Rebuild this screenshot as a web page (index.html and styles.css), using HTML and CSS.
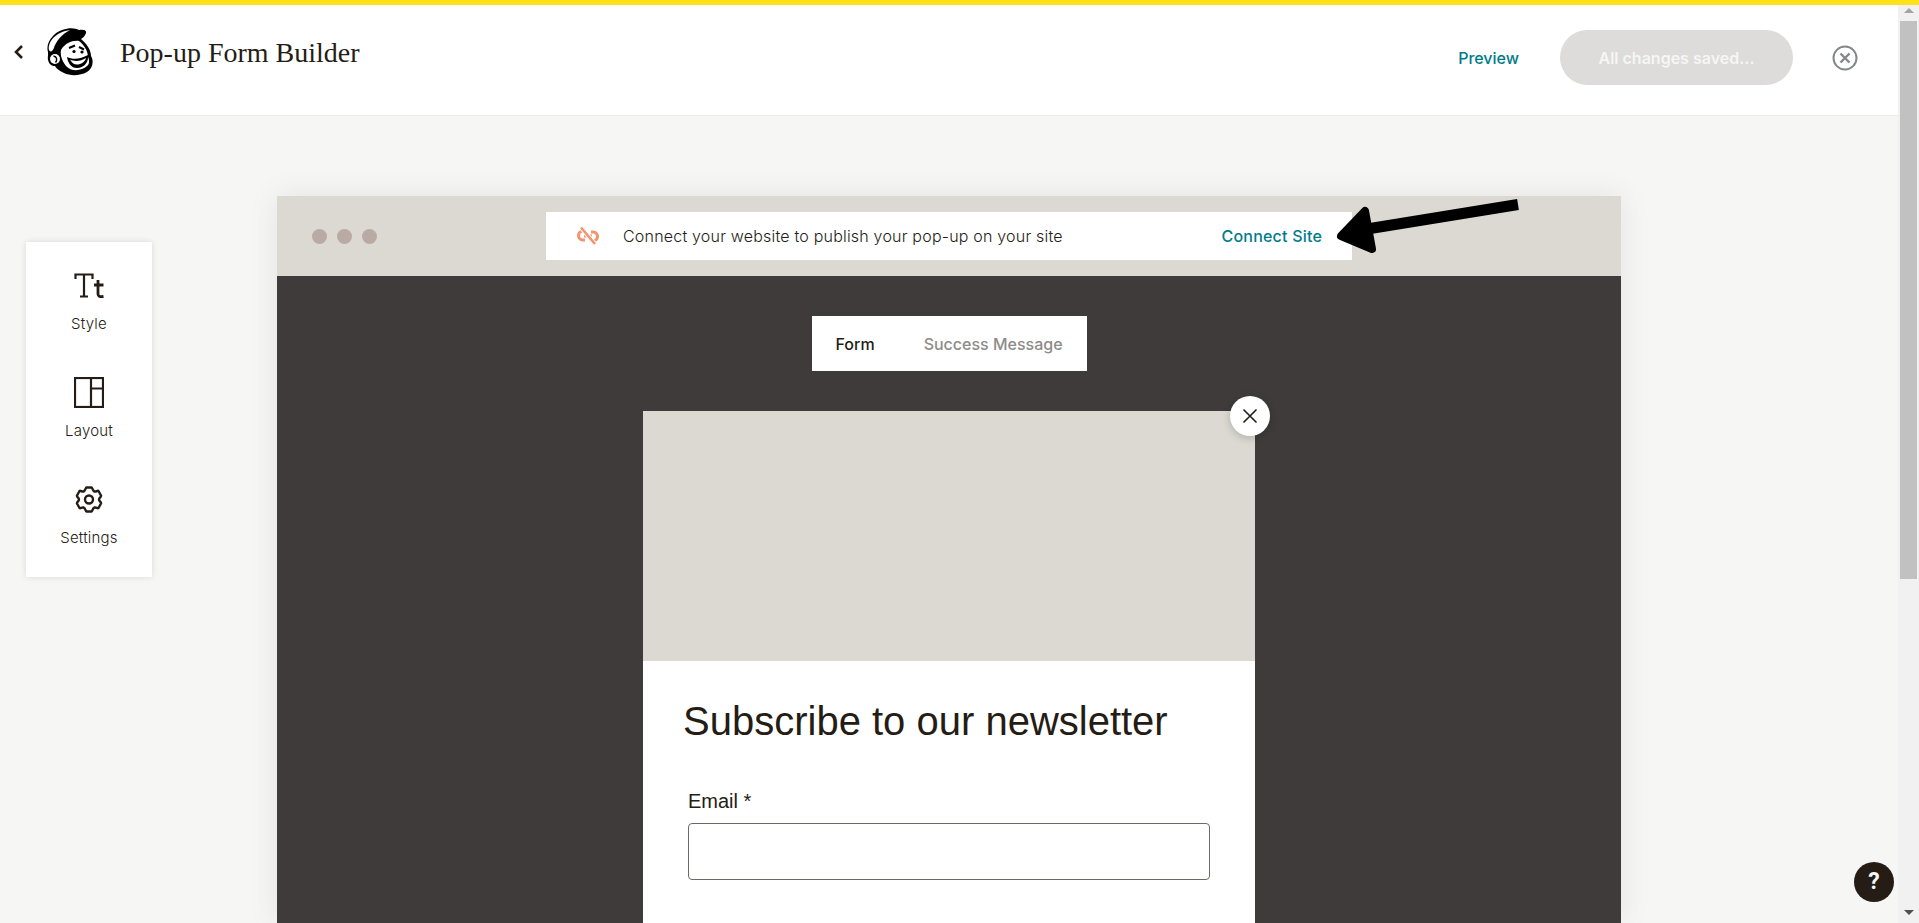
FILE: index.html
```html
<!DOCTYPE html>
<html lang="en">
<head>
  <meta charset="UTF-8" />
  <title>Pop-up Form Builder</title>
  <link rel="stylesheet" href="styles.css">
</head>
<body>
  <div class="page">
    <div class="main">

      <!-- Top bar -->
      <header class="topbar">
        <svg class="back" width="12" height="16" viewBox="0 0 12 16"><path d="M9 2 L3 8 L9 14" fill="none" stroke="#241c15" stroke-width="2.6"/></svg>
        <svg class="logo" width="48" height="48" viewBox="0 0 48 48">
          <path d="M2 24 C-1 15 8 2 22 0.500 C28 0 30 1 33 2 C37 1 41 2 40 5 C39 8 37 10 35 11 C41 16 45 22 45 28 C48 33 47 40 41 44 C34 48 24 48 18 45 C13 43 10 40 9 38 C4 38 1 33 2 28 Z" fill="#000"/>
          <path d="M3 22 C1.500 14 10 3.500 24 2 C16 6 10 13 7.500 21 C6 24 4 24 3 22 Z" fill="#fff"/>
          <path d="M15 22 C19 15 27 12 33 13 C38 17 42 23 42 29 C44 33 43 37 41 38 C36 43 25 44 20 38 C16 33 14 27 15 22 Z" fill="#fff"/>
          <path d="M21 29 C27 32 35 31 42 27 C43 33 39 40 31 40 C25 40 22 35 21 29 Z" fill="#000"/>
          <path d="M24 31.500 C29 34 35 33 40 30 C39 34 35 36.500 31 36.500 C28 36.500 25.500 34.500 24 31.500 Z" fill="#fff"/>
          <path d="M23 20 L29 17.500 M33 19 L38 21.500" stroke="#000" stroke-width="2" fill="none"/>
          <circle cx="28" cy="23.500" r="1.600" fill="#000"/>
          <circle cx="36" cy="24" r="1.600" fill="#000"/>
          <circle cx="9" cy="31" r="5" fill="#fff"/>
          <path d="M7.500 28 C11 28.500 11.500 32 9.500 34.500" stroke="#000" stroke-width="1.400" fill="none"/>
        </svg>
        <h1 class="title">Pop-up Form Builder</h1>
        <div class="actions">
          <a class="preview">Preview</a>
          <button class="saved">All changes saved...</button>
          <svg class="exit" width="26" height="26" viewBox="0 0 26 26">
            <circle cx="13" cy="13" r="11.500" fill="none" stroke="#85888a" stroke-width="2"/>
            <path d="M8.500 8.500 L17.500 17.500 M17.500 8.500 L8.500 17.500" stroke="#85888a" stroke-width="2.400"/>
          </svg>
        </div>
      </header>

      <div class="workspace">

        <!-- Side tools -->
        <nav class="tools">
          <div class="tool">
            <svg width="30" height="31" viewBox="0 0 30 31" fill="none" stroke="#241c15">
              <path d="M1.500 9 V4.500 H18.500 V9 M10 4.500 V26.500 M6 26.500 H14" stroke-width="2.200"/>
              <path d="M24 10 V24 C24 26.500 26 27 29.500 26.500 M20 15 H29.500" stroke-width="2.800"/>
            </svg>
            <span>Style</span>
          </div>
          <div class="tool">
            <svg width="30" height="31" viewBox="0 0 30 31" fill="none" stroke="#241c15" stroke-width="2.200">
              <rect x="1" y="1" width="28" height="29"/>
              <path d="M17 1 V30 M17 11.500 H29"/>
            </svg>
            <span>Layout</span>
          </div>
          <div class="tool">
            <svg width="28" height="31" viewBox="0 -1.500 28 31" fill="none" stroke="#241c15" stroke-width="2.400">
              <path d="M11.500 2 H16.500 C17.500 2 17.500 5.500 19.500 6 C21.500 6.500 22.500 4.500 23.500 5.500 L26 10 C26.500 11.500 24 12 24 14 C24 16 26.500 16.500 26 18 L23.500 22.500 C22.500 23.500 21.500 21.500 19.500 22 C17.500 22.500 17.500 26 16.500 26 H11.500 C10.500 26 10.500 22.500 8.500 22 C6.500 21.500 5.500 23.500 4.500 22.500 L2 18 C1.500 16.500 4 16 4 14 C4 12 1.500 11.500 2 10 L4.500 5.500 C5.500 4.500 6.500 6.500 8.500 6 C10.500 5.500 10.500 2 11.500 2 Z" stroke-linejoin="round"/>
              <circle cx="14" cy="14" r="4"/>
            </svg>
            <span>Settings</span>
          </div>
        </nav>

        <!-- Preview frame -->
        <section class="frame">
          <div class="chrome">
            <div class="dots"><i></i><i></i><i></i></div>
            <div class="notice">
              <svg class="unlink" width="24" height="20" viewBox="0 0 24 20" fill="none" stroke="#f4946f" stroke-width="3">
                <path d="M9 5 H7 C1 5 1 14 7 14 H9 M15 6 H17 C23 6 23 15 17 15 H15 M8 10 H16"/>
                <path d="M5 1.500 L19 18" stroke="#fff" stroke-width="4.500"/>
                <path d="M5 1.500 L19 18" stroke-width="2.600"/>
              </svg>
              <span class="notice-text">Connect your website to publish your pop-up on your site</span>
              <a class="connect">Connect Site</a>
            </div>
          </div>
          <div class="stage">
            <div class="tabs">
              <span class="tab active">Form</span>
              <span class="tab">Success Message</span>
            </div>
            <div class="popup">
              <div class="close">
                <svg width="16" height="16" viewBox="0 0 16 16"><path d="M1.500 1.500 L14.500 14.500 M14.500 1.500 L1.500 14.500" stroke="#241c15" stroke-width="1.600"/></svg>
              </div>
              <div class="popup-image"></div>
              <div class="popup-body">
                <h2>Subscribe to our newsletter</h2>
                <label>Email *</label>
                <div class="input"></div>
              </div>
            </div>
          </div>
        </section>
      </div>
    </div>

    <!-- Scrollbar -->
    <div class="scrollbar">
      <div class="arrow-up"></div>
      <div class="thumb"></div>
      <div class="arrow-down"></div>
    </div>
  </div>

  <!-- Annotation arrow drawn on top of the screenshot -->
  <svg class="pointer" width="200" height="70" viewBox="0 0 200 70">
    <path d="M187 10.500 L30 36" stroke="#000" stroke-width="11" fill="none"/>
    <path d="M10 42 L34 17 L41 55 Z" fill="#000" stroke="#000" stroke-width="8" stroke-linejoin="round"/>
  </svg>

  <div class="help">?</div>
</body>
</html>
```

FILE: styles.css
```css
* {
  box-sizing: border-box;
  margin: 0;
  padding: 0;
}

html, body {
  height: 100%;
  overflow: hidden;
}

body {
  font-family: 'Inter', 'Liberation Sans', sans-serif;
  background: #f6f6f4;
  color: #241c15;
  position: relative;
}

.page {
  display: flex;
  height: 923px;
  border-top: 5px solid #ffe01b;
}

.main {
  flex: 1;
  min-width: 0;
  overflow: hidden;
}

/* Top bar */
.topbar {
  display: flex;
  align-items: center;
  height: 111px;
  padding: 0 40px 16px 13px;
  background: #fff;
  border-bottom: 1px solid #ebebe9;
}

.back {
  margin-right: 21px;
}

.logo {
  margin-right: 26px;
}

.title {
  font-family: 'Liberation Serif', serif;
  font-size: 28px;
  font-weight: 400;
  margin-top: 2px;
}

.actions {
  display: flex;
  align-items: center;
  margin-left: auto;
  margin-top: 11px;
}

.preview {
  font-size: 16px;
  font-weight: 500;
  color: #007c89;
  margin-right: 41px;
}

.saved {
  width: 233px;
  height: 55px;
  border: none;
  border-radius: 28px;
  background: #dddcda;
  color: #f6f6f4;
  font-family: inherit;
  font-size: 16px;
  font-weight: 600;
  margin-right: 39px;
}

/* Workspace */
.workspace {
  display: flex;
  align-items: flex-start;
  padding: 80px 0 0 26px;
}

.tools {
  width: 126px;
  height: 335px;
  margin-top: 46px;
  padding-top: 28px;
  background: #fff;
  box-shadow: 0 0 6px rgba(0,0,0,0.12);
  display: flex;
  flex-direction: column;
  align-items: center;
}

.tool {
  display: flex;
  flex-direction: column;
  align-items: center;
  height: 107px;
  flex-shrink: 0;
}

.tool svg {
  height: 31px;
}

.tool span {
  font-size: 15px;
  font-weight: 300;
  letter-spacing: 0.2px;
  margin-top: 13px;
}

.frame {
  width: 1344px;
  margin-left: 125px;
  flex-shrink: 0;
  box-shadow: 0 0 30px rgba(0,0,0,0.08);
}

.chrome {
  display: flex;
  align-items: center;
  height: 80px;
  background: #dbd9d2;
  padding-left: 35px;
}

.dots {
  display: flex;
  gap: 10px;
}

.dots i {
  width: 15px;
  height: 15px;
  border-radius: 50%;
  background: #b9aba3;
}

.notice {
  display: flex;
  align-items: center;
  width: 806px;
  height: 48px;
  margin-left: 169px;
  padding: 0 30px;
  background: #fff;
  font-size: 16px;
}

.unlink {
  margin-right: 23px;
}

.notice-text {
  font-weight: 300;
  letter-spacing: 0.2px;
}

.connect {
  margin-left: auto;
  color: #007c89;
  font-weight: 500;
  letter-spacing: 0.2px;
}

.stage {
  height: 648px;
  background: #403b3b;
  padding-top: 40px;
  display: flex;
  flex-direction: column;
  align-items: center;
}

.tabs {
  display: flex;
  align-items: center;
  flex-shrink: 0;
  width: 275px;
  height: 55px;
  padding: 0 24px;
  gap: 49px;
  background: #fff;
  font-size: 16px;
  font-weight: 500;
  white-space: nowrap;
}

.tab {
  color: #8e8b88;
}

.tab.active {
  color: #241c15;
}

.popup {
  position: relative;
  flex-shrink: 0;
  width: 612px;
  margin-top: 40px;
  background: #fff;
}

.close {
  position: absolute;
  top: -15px;
  right: -15px;
  width: 40px;
  height: 40px;
  border-radius: 50%;
  background: #fff;
  box-shadow: 0 2px 8px rgba(0,0,0,0.2);
  display: flex;
  align-items: center;
  justify-content: center;
}

.popup-image {
  height: 250px;
  background: #dbd9d2;
}

.popup-body {
  height: 400px;
  padding: 36px 45px 0 45px;
  font-family: 'Liberation Sans', sans-serif;
}

.popup-body h2 {
  font-size: 40px;
  font-weight: 400;
  line-height: 48px;
  margin-left: -5px;
}

.popup-body label {
  display: block;
  font-size: 20px;
  line-height: 24px;
  margin-top: 44px;
}

.input {
  height: 57px;
  margin-top: 10px;
  border: 1px solid #6d6a66;
  border-radius: 4px;
}

/* Scrollbar */
.scrollbar {
  width: 21px;
  flex-shrink: 0;
  background: #f1f1f1;
  display: flex;
  flex-direction: column;
  align-items: center;
  padding: 3px 2px 0 2px;
}

.arrow-up {
  border: 5px solid transparent;
  border-top: 0;
  border-bottom: 5px solid #a3a3a3;
}

.thumb {
  width: 17px;
  height: 558px;
  margin-top: 8px;
  background: #c1c1c1;
}

.arrow-down {
  margin-top: auto;
  margin-bottom: 8px;
  border: 5px solid transparent;
  border-bottom: 0;
  border-top: 5px solid #505050;
}

.pointer {
  position: absolute;
  left: 1331px;
  top: 194px;
}

.help {
  position: absolute;
  left: 1854px;
  top: 862px;
  width: 40px;
  height: 40px;
  border-radius: 50%;
  background: #241c15;
  color: #f6f6f4;
  font-family: 'Roboto', sans-serif;
  font-size: 23px;
  font-weight: 700;
  line-height: 40px;
  text-align: center;
}
```
